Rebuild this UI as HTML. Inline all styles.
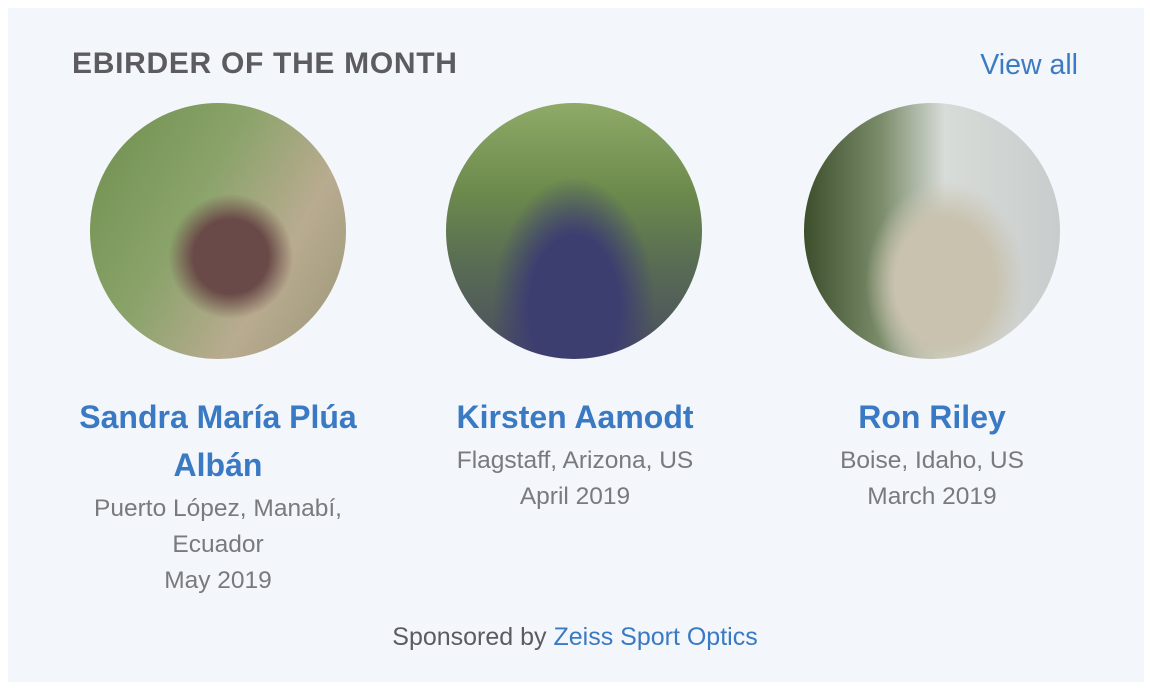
<!DOCTYPE html>
<html><head><meta charset="utf-8"><style>
body{margin:0;width:1150px;height:688px;background:#fff;font-family:"Liberation Sans",sans-serif;position:relative;overflow:hidden}
.panel{position:absolute;left:8px;top:8px;width:1136px;height:674px;background:#f3f6fa}
.h{position:absolute;left:72px;top:47px;font-size:30px;font-weight:bold;color:#5c5c60;letter-spacing:0.7px}
.va{position:absolute;right:72px;top:49px;font-size:28.5px;color:#3c7ac4}
.c{position:absolute;top:103px;width:256px;height:256px;border-radius:50%}
.col{position:absolute;top:393px;width:340px;text-align:center}
.n{font-size:32px;font-weight:bold;color:#3a79c3;line-height:48px}
.s{font-size:24.5px;color:#7a7a7e;line-height:36px;margin-top:2px}
.sp{position:absolute;top:623px;width:1150px;text-align:center;font-size:25px;color:#5c5c60}
.sp span{color:#3a79c3}
</style></head><body>
<div class="panel"></div>
<div class="h">EBIRDER OF THE MONTH</div>
<div class="va">View all</div>
<div class="c" style="left:90px;background:radial-gradient(circle at 55% 60%,#6a4a48 0 18%,transparent 30%),linear-gradient(120deg,#6f8f4e 0%,#8aa36a 40%,#b9ab90 70%,#9a9678 100%)"></div>
<div class="c" style="left:446px;background:radial-gradient(ellipse at 50% 80%,#3d3e70 0 25%,transparent 45%),linear-gradient(180deg,#8faa68 0%,#6c8a4c 35%,#5a6f53 60%,#4a4d60 100%)"></div>
<div class="c" style="left:804px;background:radial-gradient(ellipse at 55% 70%,#c8c2ae 0 25%,transparent 40%),linear-gradient(90deg,#3d4e2c 0%,#7a8c6a 30%,#d8dcd8 55%,#c8cccc 100%)"></div>
<div class="col" style="left:48px"><div class="n">Sandra María Plúa<br>Albán</div><div class="s">Puerto López, Manabí,<br>Ecuador<br>May 2019</div></div>
<div class="col" style="left:405px"><div class="n">Kirsten Aamodt</div><div class="s">Flagstaff, Arizona, US<br>April 2019</div></div>
<div class="col" style="left:762px"><div class="n">Ron Riley</div><div class="s">Boise, Idaho, US<br>March 2019</div></div>
<div class="sp">Sponsored by <span>Zeiss Sport Optics</span></div>
</body></html>
